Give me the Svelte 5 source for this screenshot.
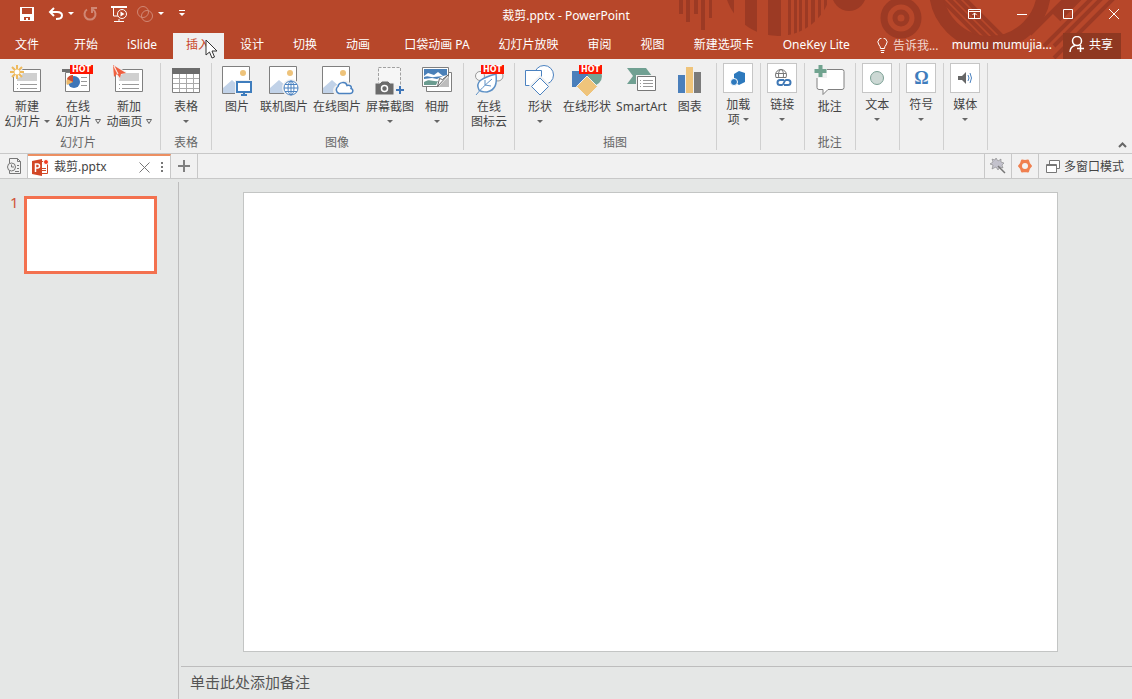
<script lang="ts">
  type Item = { icon: string; lines: string[]; arrow?: 'inline' | 'open' | 'below'; hot?: boolean; size?: string };
  type Group = { label: string; items: Item[]; small?: boolean };

  const tabs = ['文件', '开始', 'iSlide', '插入', '设计', '切换', '动画', '口袋动画 PA', '幻灯片放映', '审阅', '视图', '新建选项卡', 'OneKey Lite'];
  let activeTab = $state('插入');

  const groups: Group[] = [
    {
      label: '幻灯片',
      items: [
        { icon: 'new', lines: ['新建', '幻灯片'], arrow: 'inline', size: 'mid' },
        { icon: 'online', lines: ['在线', '幻灯片'], arrow: 'open', hot: true, size: 'mid' },
        { icon: 'anim', lines: ['新加', '动画页'], arrow: 'open', size: 'mid' },
      ],
    },
    { label: '表格', items: [{ icon: 'table', lines: ['表格'], arrow: 'below' }] },
    {
      label: '图像',
      items: [
        { icon: 'picture', lines: ['图片'] },
        { icon: 'webpic', lines: ['联机图片'] },
        { icon: 'cloudpic', lines: ['在线图片'] },
        { icon: 'screenshot', lines: ['屏幕截图'], arrow: 'below' },
        { icon: 'album', lines: ['相册'], arrow: 'below' },
      ],
    },
    { label: '', items: [{ icon: 'leaf', lines: ['在线', '图标云'], hot: true }] },
    {
      label: '插图',
      items: [
        { icon: 'shapes', lines: ['形状'], arrow: 'below' },
        { icon: 'webshapes', lines: ['在线形状'], hot: true },
        { icon: 'smartart', lines: ['SmartArt'] },
        { icon: 'chart', lines: ['图表'] },
      ],
    },
    { label: '', small: true, items: [{ icon: 'addin', lines: ['加载', '项'], arrow: 'inline' }] },
    { label: '', small: true, items: [{ icon: 'link', lines: ['链接'], arrow: 'below' }] },
    { label: '批注', items: [{ icon: 'comment', lines: ['批注'] }] },
    { label: '', small: true, items: [{ icon: 'text', lines: ['文本'], arrow: 'below' }] },
    { label: '', small: true, items: [{ icon: 'symbol', lines: ['符号'], arrow: 'below' }] },
    { label: '', small: true, items: [{ icon: 'media', lines: ['媒体'], arrow: 'below' }] },
  ];
</script>

{#snippet caret()}
  <svg class="caret" width="6" height="3" viewBox="0 0 6 3"><path d="M0 0h6L3 3z" fill="currentColor" /></svg>
{/snippet}

{#snippet photo()}
  <path d="M2.500 1.500h27v27h-27z" fill="#fff" stroke="#7f7f7f" />
  <circle cx="23" cy="8" r="3" fill="#eec37b" />
  <path d="M3 28v-5l9-8 8 7 2 6H3z" fill="#c1d2e8" />
{/snippet}

{#snippet slideIcon()}
  <path d="M3.500 4.500h27v22h-27z" fill="#fff" stroke="#7f7f7f" />
  <path d="M7 8h20v8H7z" fill="#d0d0d0" />
  <path d="M7 19.500h1m2 0h17M7 23.500h1m2 0h17" stroke="#9a9a9a" fill="none" />
{/snippet}

{#snippet icon(name: string)}
  <svg class="pic" width="34" height="34" viewBox="0 0 34 34" fill="none" aria-hidden="true">
    {#if name === 'new'}
      {@render slideIcon()}
      <circle cx="7" cy="7" r="6" fill="#f0f0f0" />
      <path d="M7 0v14M0 7h14M2 2l10 10M12 2 2 12" stroke="#eeb95c" stroke-width="2" />
      <circle cx="7" cy="7" r="2.500" fill="#fff" />
    {:else if name === 'online'}
      <path d="M1 4h30v3H1z" fill="#707070" />
      <path d="M4.500 7.500h24v19h-24z" fill="#fff" stroke="#7f7f7f" />
      <circle cx="13" cy="17" r="6" fill="#3f76b8" />
      <path d="M12 17V10a7 7 0 0 0-6 10z" fill="#ecb96b" />
      <path d="M12 17v-7a7 7 0 0 0-6 4z" fill="#cf4b32" />
      <path d="M20 12.500h6m-6 4h6m-6 4h6" stroke="#999" />
    {:else if name === 'anim'}
      {@render slideIcon()}
      <path d="m0-1 15 8-6 3-2 6z" fill="#f0f0f0" />
      <path d="m1 0 13 8-5 1-1 4-3-4z" fill="#ef5f40" />
      <path d="m1 0 1 12 3-3z" fill="#f0613f" />
      <path d="m2 1 4 8" stroke="#fff" />
    {:else if name === 'table'}
      <path d="M3.500 4.500h27v23h-27z" fill="#fff" stroke="#808080" />
      <path d="M3 3h28v6H3z" fill="#6c6c6c" />
      <path d="M10.500 9v18M17.500 9v18M24.500 9v18M4 13.500h26M4 18.500h26M4 23.500h26" stroke="#aaa" />
    {:else if name === 'picture'}
      {@render photo()}
      <path d="M15 15h18v15H15z" fill="#f0f0f0" />
      <path d="M17 17h14v10H17z" fill="#fff" stroke="#3f7dbd" stroke-width="2" />
      <path d="M24 28v3m-3-1h6" stroke="#3f7dbd" stroke-width="2" />
    {:else if name === 'webpic'}
      {@render photo()}
      <circle cx="24" cy="23" r="9" fill="#f0f0f0" />
      <g stroke="#4b82c0">
        <circle cx="24" cy="23" r="7" fill="#fff" />
        <ellipse cx="24" cy="23" rx="3" ry="7" />
        <path d="M17 23h14M18 19.500h12m-12 7h12M24 16v14" />
      </g>
    {:else if name === 'cloudpic'}
      {@render photo()}
      <path d="M19 29.500a4 4 0 0 1 0-8 6 6 0 0 1 10-2 4 4 0 0 1 2 4c3 1 2 6-1 6z" fill="#fff" stroke="#f0f0f0" stroke-width="4" />
      <path d="M19 28.500a4 4 0 0 1-1-7c1-5 8-5 9-1 3-1 5 1 4 3 3 1 2 5-1 5z" fill="#fff" stroke="#4b82c0" stroke-width="1.500" />
    {:else if name === 'screenshot'}
      <path d="M5.500 2.500h22v25h-22z" fill="#f6f6f6" stroke="#a0a0a0" stroke-dasharray="3 1.500" />
      <path d="M2 18h5l2-2h6l2 2h4v12H2z" fill="#6b6b6b" stroke="#f0f0f0" />
      <circle cx="11.500" cy="23.500" r="3" stroke="#fff" stroke-width="1.500" />
      <path d="M22 20h10v10H22z" fill="#f0f0f0" />
      <path d="M23 25h8m-4-4v8" stroke="#3f76b8" stroke-width="2" />
    {:else if name === 'album'}
      <path d="M6.500 7.500h25v19h-25z" fill="#fff" stroke="#7f7f7f" />
      <path d="M2.500 2.500h26v19h-26z" fill="#fff" stroke="#7f7f7f" />
      <path d="M4 4h23v6l-4 1-5-4-4 3-6-2-4 3z" fill="#4a80b8" />
      <path d="M4 12c5-2 6 1 10 0l9-1-6 3-5-1-8 1z" fill="#4a80b8" />
      <path d="M4 17c6-4 8 0 14-1l-2 4H4z" fill="#6b9c90" />
      <path d="m18 22 11-11v11z" fill="#bdbdbd" />
      <path d="m17.500 21.500 2-8 3 1 6-5z" fill="#fff" stroke="#666" />
    {:else if name === 'leaf'}
      <circle cx="8" cy="11" r="4.500" stroke="#999" fill="#f8f8f8" />
      <circle cx="26" cy="11" r="5" stroke="#999" fill="#f8f8f8" />
      <path d="M7 25C3 17 9 13 24 9c1 9 0 16-9 18-3 0-6 0-8-2z" fill="#fff" stroke="#5e91c6" stroke-width="1.500" />
      <path d="M4 30C8 25 13 20 20 14M13 20l6 1m-6-1v-5" stroke="#5e91c6" />
    {:else if name === 'shapes'}
      <circle cx="21" cy="10" r="9.500" fill="#fff" stroke="#4b82c0" />
      <path d="M2.500 5.500h16v15h-16z" fill="#fff" stroke="#4b82c0" />
      <path d="m17 12 9.500 9.500L17 31l-9.500-9.500z" fill="#fff" stroke="#f0f0f0" stroke-width="3" />
      <path d="m17 13 8.500 8.500L17 30l-8.500-8.500z" fill="#fff" stroke="#4b82c0" />
    {:else if name === 'webshapes'}
      <circle cx="22" cy="11" r="10" fill="#72a495" />
      <path d="M2 6h16v16H2z" fill="#4a7fbb" />
      <path d="m17 11 10.500 10.500L17 32 6.500 21.500z" fill="#efc47b" stroke="#f0f0f0" />
    {:else if name === 'smartart'}
      <path d="M3 3h19l6 8-6 8H3l6-8z" fill="#70a092" />
      <path d="M12 10h20v17H12z" fill="#f0f0f0" />
      <path d="M13.500 11.500h18v14h-18z" fill="#fff" stroke="#777" />
      <path d="M16 15.500h1m2 0h10m-13 3h1m2 0h10m-13 3h1m2 0h10" stroke="#999" />
    {:else if name === 'chart'}
      <path d="M5 10h7v18H5z" fill="#4a7fbb" />
      <path d="M13 2h7v26h-7z" fill="#efc47b" />
      <path d="M21 7h7v21h-7z" fill="#7b7b7b" />
    {:else if name === 'comment'}
      <path d="M6 4.500h23q2 0 2 2v16q0 2-2 2H15l-5 5v-5H6q-2 0-2-2v-16q0-2 2-2z" fill="#fff" stroke="#808080" />
      <path d="M1 0h13v13H1z" fill="#f0f0f0" />
      <path d="M7.500 0v12m-6-6h12" stroke="#70a38f" stroke-width="4" />
    {/if}
  </svg>
{/snippet}

{#snippet smallIcon(name: string)}
  <svg width="20" height="20" viewBox="0 0 20 20" fill="none" aria-hidden="true">
    {#if name === 'addin'}
      <path d="m11 3 6 2v9l-6 3-5-3V6z" fill="#2d79bd" />
      <circle cx="6" cy="14" r="3.500" fill="#2d79bd" stroke="#fff" />
    {:else if name === 'link'}
      <g stroke="#777">
        <circle cx="9" cy="7" r="5.500" />
        <ellipse cx="9" cy="7" rx="2.500" ry="5.500" />
        <path d="M4 5.500h10M4 9.500h10" />
      </g>
      <path d="M4 10h15v8H4z" fill="#fff" />
      <path d="M12 12H8a2.500 2.500 0 0 0 0 5h2c2 0 2-5 4-5h2a2.500 2.500 0 0 1 0 5h-4" stroke="#3f78b5" stroke-width="2" />
    {:else if name === 'text'}
      <circle cx="10" cy="10" r="6.500" fill="#ccd8d4" stroke="#7ba094" />
    {:else if name === 'media'}
      <path d="M3 8h4l4-4v12l-4-4H3z" fill="#666" />
      <path d="M13 7q2 3 0 6m2-8q3 5 0 10" stroke="#4b82c0" />
    {/if}
  </svg>
{/snippet}

<div class="app">
  <header>
    <svg class="pattern" width="472" height="59" viewBox="0 0 472 59" aria-hidden="true">
      <defs>
        <clipPath id="disc"><circle cx="118" cy="-18" r="54" /></clipPath>
        <clipPath id="hoop"><circle cx="330" cy="-11" r="48" /></clipPath>
      </defs>
      <g fill="#9c3a24">
        <path d="M19 0h4v14h-4zM26 0h4v22h-4zM34 0h4v14h-4zM41 0h4v30h-4zM49 0h3v18h-3z" />
        <g clip-path="url(#disc)">
          <path d="M64 0h10v40H64zM85 0h12v40H85zM108 0h13v40h-13zM128 0h3v40h-3zM134 0h3v40h-3zM139 0h3v40h-3zM145 0h3v40h-3zM151 0h4v40h-4zM158 0h3v40h-3zM164 0h3v40h-3z" />
        </g>
        <circle cx="189" cy="-6" r="17" />
      </g>
      <g fill="none" stroke="#9c3a24">
        <circle cx="241" cy="18" r="17" stroke-width="7" />
        <circle cx="241" cy="18" r="6" stroke-width="5" />
        <circle cx="330" cy="-11" r="54" stroke-width="14" />
        <g clip-path="url(#hoop)" stroke-width="4">
          <path d="m270-12 60 60m-52-60 60 60m-52-60 60 60m-52-60 60 60" />
        </g>
        <path d="m370 34 38-38" stroke-width="4" />
        <path d="m384 46 50-50m-40 50 50-50m-50 62 62-62" stroke-width="4" />
        <path d="m396 17 21-21" stroke-width="12" />
      </g>
    </svg>

    <div class="titlebar">
      <div class="quick">
        <button aria-label="保存">
          <svg width="14" height="14" viewBox="0 0 14 14"><path d="M0 0h14v14H0zM2 1v6h10V1zM4 10v3h2v-2h2v2h2v-3z" fill="#fff" fill-rule="evenodd" /></svg>
        </button>
        <button class="undo" aria-label="撤消">
          <svg width="15" height="13" viewBox="0 0 15 13" fill="none" stroke="#fff" stroke-width="2"><path d="M6 1 2 5l4 4M2 5h7q5 0 5 3.500T8 12" /></svg>
          {@render caret()}
        </button>
        <button class="faded" aria-label="重复">
          <svg width="14" height="14" viewBox="0 0 14 14" fill="none" stroke="#fff" stroke-width="2"><path d="M4 2.500a5.500 5.500 0 1 0 6 0M9 6V1h5" /></svg>
        </button>
        <button aria-label="从头开始">
          <svg width="17" height="16" viewBox="0 0 17 16" fill="none" stroke="#fff"><path d="M0 1h16" stroke-width="2" /><path d="M2.500 2v8h5M3 15.500h10M8 13v2" /><circle cx="11" cy="8" r="4.500" fill="#b7472a" /><path d="M9.500 5.500v5l4-2.500z" fill="#fff" stroke="none" /></svg>
        </button>
        <button class="merge" aria-label="合并形状">
          <svg class="faded" width="16" height="16" viewBox="0 0 16 16" fill="none" stroke="#fff"><circle cx="6" cy="6" r="5.500" /><circle cx="10" cy="10" r="5.500" /></svg>
          {@render caret()}
        </button>
        <button aria-label="自定义快速访问工具栏">
          <svg width="6" height="7" viewBox="0 0 6 7" fill="#fff"><path d="M0 0h6v1H0zM0 3h6L3 6z" /></svg>
        </button>
      </div>
      <h1>裁剪.pptx - PowerPoint</h1>
      <div class="window">
        <button aria-label="功能区显示选项">
          <svg width="13" height="10" viewBox="0 0 13 10" fill="none" stroke="#fff"><path d="M.5.5h12v9H.5zM0 2.500h13M6.500 9V4M4.500 6l2-2 2 2" /></svg>
        </button>
        <button aria-label="最小化"><svg width="10" height="10" viewBox="0 0 10 10"><path d="M0 5.500h10" stroke="#fff" /></svg></button>
        <button aria-label="最大化"><svg width="10" height="10" viewBox="0 0 10 10"><path d="M.5.5h9v9h-9z" fill="none" stroke="#fff" /></svg></button>
        <button aria-label="关闭"><svg width="10" height="10" viewBox="0 0 10 10"><path d="m0 0 10 10M10 0 0 10" stroke="#fff" /></svg></button>
      </div>
    </div>

    <nav class="tabs">
      {#each tabs as tab, i}
        <button class="tab" class:active={tab === activeTab} class:file={i === 0} class:wide={tab === '口袋动画 PA'} onclick={() => (activeTab = tab)}>{tab}</button>
      {/each}
      <button class="tell">
        <svg width="11" height="15" viewBox="0 0 11 15" fill="none" stroke="#fff"><path d="M3.500 10.500q0-2-1.500-3.500a4.500 4.500 0 1 1 7 0q-1.500 1.500-1.500 3.500zM3.500 12.500h4M4 14.500h3" /></svg>
        告诉我...
      </button>
      <button class="user">mumu mumujia...</button>
      <button class="share">
        <svg width="17" height="17" viewBox="0 0 17 17" fill="none" stroke="#fff" stroke-width="1.500"><circle cx="8" cy="5" r="4.500" /><path d="M1 16q0-5 5-6.500M8 12.500h7M11.500 9v7" /></svg>
        共享
      </button>
    </nav>
    <svg class="pointer" width="13" height="20" viewBox="0 0 13 20"><path d="M1 1v15l3.500-3 2.500 6 2.500-1L7 12h5z" fill="#fff" stroke="#333" /></svg>
  </header>

  <section class="ribbon">
    {#each groups as group, g}
      <div class="group" class:many={group.items.length > 1} class:first={g === 0} class:small={group.small}>
        <div class="items">
          {#each group.items as item}
            <button class="item {item.size ?? ''}">
              {#if group.small}
                <span class="box">
                  {#if item.icon === 'symbol'}<span class="omega">Ω</span>{:else}{@render smallIcon(item.icon)}{/if}
                </span>
              {:else}
                {@render icon(item.icon)}
              {/if}
              {#if item.hot}<span class="hot">HOT</span>{/if}
              {#each item.lines as line, i}
                <span class="line">
                  {line}
                  {#if i === item.lines.length - 1 && item.arrow === 'inline'}
                    {@render caret()}
                  {:else if i === item.lines.length - 1 && item.arrow === 'open'}
                    <svg class="caret" width="6" height="5" viewBox="0 0 6 5"><path d="M.5.5h5L3 4.500z" fill="none" stroke="#666" /></svg>
                  {/if}
                </span>
              {/each}
              {#if item.arrow === 'below'}
                <span class="line">{@render caret()}</span>
              {/if}
            </button>
          {/each}
        </div>
        {#if group.label}<div class="label">{group.label}</div>{/if}
      </div>
    {/each}
    <button class="collapse" aria-label="折叠功能区">
      <svg width="9" height="6" viewBox="0 0 9 6"><path d="m1 5 3.500-3.500L8 5" fill="none" stroke="#666" stroke-width="2" /></svg>
    </button>
  </section>

  <div class="docbar">
    <button class="recent" aria-label="最近的文档">
      <svg width="16" height="17" viewBox="0 0 16 17" fill="none" stroke="#777"><path d="M3.500 5V.5h8l3 3v12h-11V13M11.500.5v3h3" /><circle cx="5.500" cy="9" r="4" fill="#f0f0f0" /><path d="M5.500 6.500V9H8M11 7.500h2m-2 3h2m-4 3h4" /></svg>
    </button>
    <div class="doc">
      <svg width="17" height="17" viewBox="0 0 17 17"><path d="M9 2.500h6.500v12H9" fill="#fff" stroke="#d24726" /><path d="M10 9.500h4m-4 2h4" stroke="#d24726" /><path d="M0 2 10 0v17L0 15z" fill="#d24726" /><path d="M3.500 13V5h2a2 2 0 0 1 0 4h-2" fill="none" stroke="#fff" stroke-width="1.500" /><circle cx="14" cy="3" r="2.500" fill="#f33a1f" stroke="#fff" /></svg>
      <span class="name">裁剪.pptx</span>
      <button aria-label="关闭文档"><svg width="11" height="11" viewBox="0 0 11 11"><path d="m.5.5 10 10m0-10-10 10" stroke="#777" /></svg></button>
      <button aria-label="更多"><svg width="3" height="11" viewBox="0 0 3 11" fill="#777"><path d="M0 0h2v2H0zM0 4h2v2H0zM0 8h2v2H0z" /></svg></button>
    </div>
    <button class="add" aria-label="新建文档"><svg width="12" height="12" viewBox="0 0 12 12"><path d="M6 0v12M0 6h12" stroke="#808080" stroke-width="2" /></svg></button>
    <div class="tools">
      <button aria-label="工具"><svg width="16" height="16" viewBox="0 0 16 16"><path d="m6 0 2 3 3-2v3l3 1-2 2 1 3-3-1-2 3-2-3-4 2 1-4-3-1 3-2-1-3 3 1z" fill="#c3c2cc" stroke="#777" stroke-width=".5" /><path d="m8 8 7 7" stroke="#777" stroke-width="1.500" /></svg></button>
      <button aria-label="设置"><svg width="14" height="14" viewBox="0 0 14 14"><path d="M4 1.500 7 2l3-.5 1 3L13 7l-2 2.500-1 3L7 12l-3 .5-1-3L1 7l2-2.500z" fill="#f08050" stroke="#f08050" stroke-width="2" stroke-linejoin="round" /><circle cx="7" cy="7" r="3" fill="#f3f3f3" /></svg></button>
      <button class="mode">
        <svg width="14" height="13" viewBox="0 0 14 13" fill="#fff" stroke="#777"><path d="M3.500.5h10v8h-10z" /><path d="M.5 4.500h10v8H.5zM.5 5.500h10" /></svg>
        多窗口模式
      </button>
    </div>
  </div>

  <main>
    <aside>
      <span class="number">1</span>
      <button class="thumb" aria-label="幻灯片 1"></button>
    </aside>
    <div class="editor">
      <div class="canvas"><div class="slide"></div></div>
      <div class="notes">单击此处添加备注</div>
    </div>
  </main>
</div>

<style>
  :global(body) {
    margin: 0;
  }
  .app {
    height: 100vh;
    display: flex;
    flex-direction: column;
    overflow: hidden;
    background: #e5e7e6;
    color: #444;
    font: 12px/15px 'Noto Sans', 'Noto Sans CJK SC', sans-serif;
  }
  button {
    margin: 0;
    padding: 0;
    border: 0;
    background: none;
    color: inherit;
    font: inherit;
    white-space: nowrap;
    display: flex;
    align-items: center;
    justify-content: center;
  }
  svg {
    display: block;
    flex: none;
  }

  /* ── Title bar ── */
  header {
    position: relative;
    background: #b7472a;
    color: #fff;
  }
  .pattern {
    position: absolute;
    top: 0;
    right: 0;
  }
  .titlebar {
    position: relative;
    display: grid;
    grid-template-columns: 1fr auto 1fr;
    height: 33px;
  }
  .quick {
    display: flex;
    align-items: center;
    gap: 14px;
    height: 27px;
    padding-left: 20px;
  }
  .undo,
  .merge {
    gap: 5px;
  }
  .undo {
    margin-right: -5px;
  }
  .merge {
    margin: 0 1px 0 -5px;
  }
  .faded {
    opacity: 0.35;
  }
  h1 {
    margin: 0;
    font: inherit;
    line-height: 31px;
  }
  .window {
    display: flex;
    justify-content: flex-end;
    align-items: center;
    height: 27px;
    padding-right: 13px;
    gap: 36px;
  }

  /* ── Tabs ── */
  .tabs {
    position: relative;
    display: flex;
    height: 26px;
    gap: 3px;
    padding: 0 11px 0 2px;
  }
  .tab {
    padding: 0 13px 4px;
  }
  .tab.file {
    margin-right: 6px;
  }
  .tab.wide {
    margin-left: 5px;
  }
  .tab.active {
    padding: 0 14px 4px 13px;
    background: #f0f0f0;
    color: #c8472a;
  }
  .tell {
    gap: 5px;
    padding-bottom: 2px;
    margin-left: 11px;
    color: #f3d8d0;
  }
  .user {
    margin-left: auto;
    padding-bottom: 4px;
  }
  .share {
    gap: 3px;
    padding: 0 8px 4px 6px;
    margin-left: 8px;
    background: #8f3821;
  }
  .pointer {
    position: absolute;
    left: 205px;
    top: 39px;
  }

  /* ── Ribbon ── */
  .ribbon {
    display: flex;
    height: 94px;
    background: #f0f0f0;
    border-bottom: 1px solid #c8c8c8;
  }
  .group {
    display: flex;
    flex-direction: column;
    margin: 4px 0 3px;
    padding: 0 7px;
    border-right: 1px solid #d0d0d0;
  }
  .group.many {
    padding-right: 8px;
  }
  .group.first {
    padding-left: 4px;
  }
  .group.small {
    padding: 0 6px;
  }
  .items {
    display: flex;
    align-items: flex-start;
    gap: 5px;
  }
  .item {
    position: relative;
    flex-direction: column;
    min-width: 36px;
    padding-top: 2px;
  }
  .mid {
    min-width: 46px;
  }
  .small .item {
    min-width: 31px;
    padding: 0;
  }
  .line {
    display: flex;
    align-items: center;
    gap: 3px;
    height: 15px;
    color: #444;
  }
  .caret {
    color: #666;
  }
  header .caret {
    color: #fff;
  }
  .hot {
    position: absolute;
    left: calc(50% - 8px);
    top: 2px;
    padding: 0 2px;
    background: #ff1500;
    color: #fff;
    font: bold 8px/9px 'DejaVu Sans', sans-serif;
  }
  .box {
    display: flex;
    align-items: center;
    justify-content: center;
    width: 28px;
    height: 28px;
    margin-bottom: 4px;
    border: 1px solid #c6c6c6;
    background: #fff;
  }
  .omega {
    color: #3f7dbd;
    font: bold 18px/20px 'Liberation Serif', serif;
  }
  .label {
    margin-top: auto;
    text-align: center;
    color: #666;
  }
  .collapse {
    align-self: flex-end;
    margin: 0 5px 5px auto;
  }

  /* ── Document tabs ── */
  .docbar {
    display: flex;
    height: 24px;
    background: #f1f1f1;
    border-bottom: 1px solid #c8c8c8;
  }
  .recent {
    width: 28px;
    border-right: 1px solid #c8c8c8;
  }
  .doc {
    display: flex;
    align-items: center;
    width: 138px;
    padding: 0 0 0 4px;
    gap: 5px;
    border-top: 2px solid #ec8f62;
    border-right: 1px solid #c8c8c8;
    background: #fff;
  }
  .doc button {
    margin-right: 6px;
  }
  .name {
    flex: 1;
    padding-bottom: 2px;
  }
  .add {
    width: 27px;
    border-right: 1px solid #c8c8c8;
  }
  .tools {
    display: flex;
    margin-left: auto;
  }
  .tools button {
    width: 27px;
    border-left: 1px solid #c8c8c8;
  }
  .tools .mode {
    width: auto;
    gap: 4px;
    padding: 0 8px 0 7px;
  }

  /* ── Workspace ── */
  main {
    flex: 1;
    display: flex;
    min-height: 0;
    padding-top: 3px;
  }
  aside {
    display: flex;
    align-items: flex-start;
    width: 168px;
    padding: 14px 0 0 10px;
    gap: 5px;
    border-right: 1px solid #bdbdbd;
  }
  .number {
    width: 9px;
    color: #d0553a;
    font-size: 15px;
    line-height: 12px;
  }
  .thumb {
    width: 133px;
    aspect-ratio: 133 / 78;
    border: 3px solid #f3714f;
    background: #fff;
  }
  .editor {
    flex: 1;
    display: flex;
    flex-direction: column;
    padding-left: 2px;
  }
  .canvas {
    flex: 1;
    padding: 10px 74px 14px 62px;
  }
  .slide {
    height: 100%;
    box-sizing: border-box;
    border: 1px solid #c3c5c4;
    background: #fff;
  }
  .notes {
    padding: 6px 9px 7px;
    border-top: 1px solid #bdbdbd;
    font-size: 15px;
    line-height: 19px;
    color: #555;
  }
</style>
